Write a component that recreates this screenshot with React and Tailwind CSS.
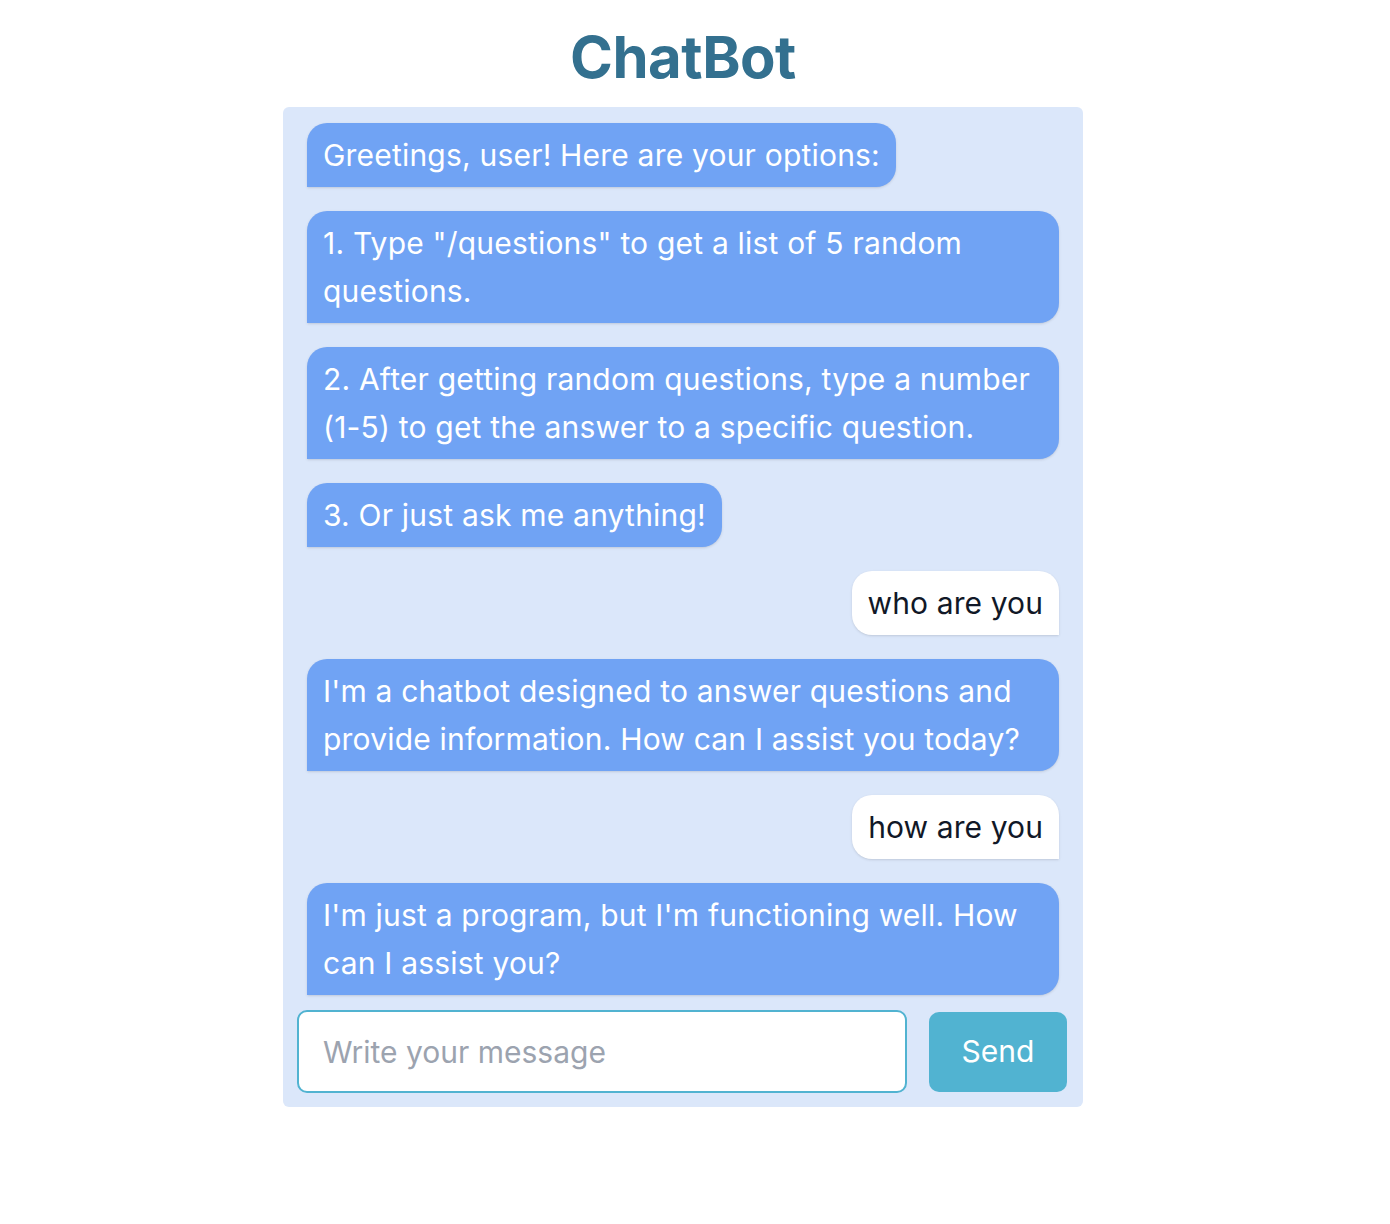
const messages = [
  { from: "bot", text: "Greetings, user! Here are your options:" },
  { from: "bot", text: '1. Type "/questions" to get a list of 5 random questions.' },
  { from: "bot", text: "2. After getting random questions, type a number (1-5) to get the answer to a specific question." },
  { from: "bot", text: "3. Or just ask me anything!" },
  { from: "user", text: "who are you" },
  { from: "bot", text: "I'm a chatbot designed to answer questions and provide information. How can I assist you today?" },
  { from: "user", text: "how are you" },
  { from: "bot", text: "I'm just a program, but I'm functioning well. How can I assist you?" },
];

const App = () => {
  return (
    <div className="min-h-screen bg-white flex flex-col items-center pr-6 font-['Inter',sans-serif]">
      <h1 className="mt-[22px] mb-[15px] text-[58px] leading-[70px] font-bold text-[#33708f] tracking-[-0.5px]">
        ChatBot
      </h1>
      <div className="w-[800px] h-[1000px] bg-[#dbe7fa] rounded-md flex flex-col">
        <div className="flex-1 overflow-hidden flex flex-col gap-6 px-6 pt-4">
          {messages.map((m, i) =>
            m.from === "bot" ? (
              <div
                key={i}
                className="self-start max-w-full px-4 py-2 text-[30px] leading-[48px] tracking-[0.2px] text-white bg-[#70a3f4] rounded-[20px] rounded-bl-none shadow-sm"
              >
                {m.text}
              </div>
            ) : (
              <div
                key={i}
                className="self-end px-4 py-2 text-[30px] leading-[48px] tracking-[0.1px] text-[#111827] bg-white rounded-[20px] rounded-br-none shadow-sm"
              >
                {m.text}
              </div>
            )
          )}
        </div>
        <div className="flex items-center gap-[22px] pl-[14px] pr-4 pb-[14px]">
          <input
            className="flex-1 h-[83px] px-6 text-[30px] bg-white border-2 border-[#51b3d1] rounded-[10px] outline-none placeholder:text-[#9ca3af]"
            placeholder="Write your message"
          />
          <button className="w-[138px] h-[80px] bg-[#51b3d1] text-white text-[30px] rounded-[10px]">
            Send
          </button>
        </div>
      </div>
    </div>
  );
};

export default App;
